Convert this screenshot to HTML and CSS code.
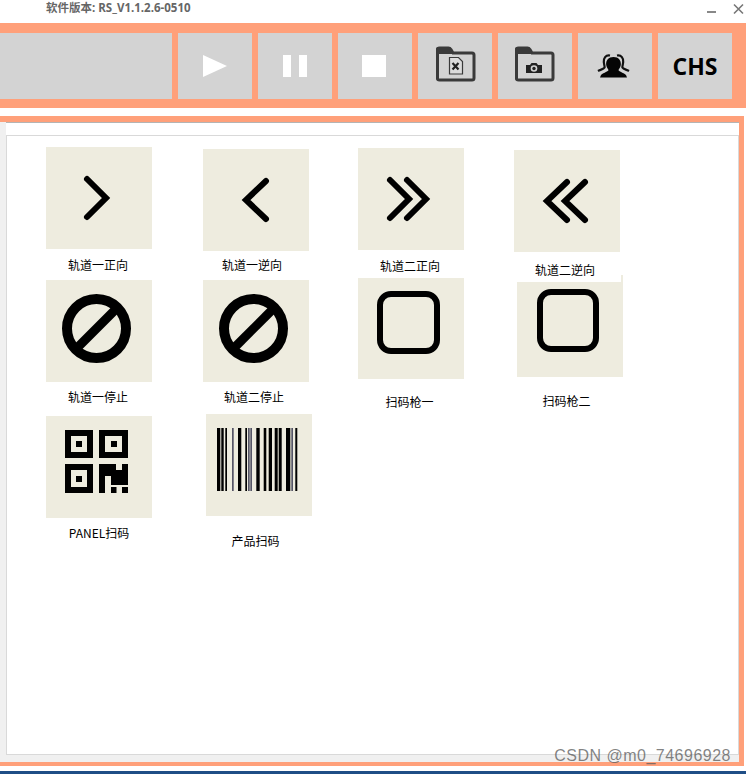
FILE: index.html
```html
<!DOCTYPE html>
<html lang="zh-CN">
  <head>
    <meta charset="UTF-8">
    <title>软件版本</title>
    <link rel="stylesheet" href="styles.css">
  </head>
  <body>
    <div class="titlebar">
      <span class="version">软件版本: RS_V1.1.2.6-0510</span>
      <svg class="winbtns" width="40" height="23" viewBox="0 0 40 23">
        <path d="M1 12h9" stroke="#888" stroke-width="2" fill="none"/>
        <path d="M28 4.5l9 9M37 4.5l-9 9" stroke="#777" stroke-width="1.6" fill="none"/>
      </svg>
    </div>

    <div class="toolbar">
      <div class="tool blank"></div>
      <div class="tool">
        <svg width="74" height="66" viewBox="0 0 74 66"><polygon points="25,22 49,33 25,44" fill="#fff"/></svg>
      </div>
      <div class="tool">
        <svg width="74" height="66" viewBox="0 0 74 66"><path d="M25 22h8v22h-8zM41 22h8v22h-8z" fill="#fff"/></svg>
      </div>
      <div class="tool">
        <svg width="74" height="66" viewBox="0 0 74 66"><rect x="24" y="22" width="24" height="22" fill="#fff"/></svg>
      </div>
      <div class="tool">
        <svg width="74" height="66" viewBox="0 0 74 66">
          <path d="M19.500 46.500V17q0-2 2-2h9q1.500 0 2.500 1.500l2 3.500h19q2 0 2 2v23q0 2-2 2H21.500q-2 0-2-1.500z" fill="none" stroke="#3a3a3a" stroke-width="3"/>
          <path d="M18 21v-5q0-2 2-2h10q2 0 3 2l3 5z" fill="#3a3a3a"/>
          <path d="M31.500 24.500h9l4 4v12.500h-13z" fill="#dcdcdc" stroke="#3a3a3a" stroke-width="1.200"/>
          <path d="M34.500 30l6 6.500M40.500 30l-6 6.500" stroke="#222" stroke-width="2.200" fill="none"/>
        </svg>
      </div>
      <div class="tool">
        <svg width="74" height="66" viewBox="0 0 74 66">
          <path d="M18.500 46.500V17q0-2 2-2h9q1.500 0 2.500 1.500l2 3.500h19q2 0 2 2v23q0 2-2 2H20.500q-2 0-2-1.500z" fill="none" stroke="#3a3a3a" stroke-width="3"/>
          <path d="M17 21v-5q0-2 2-2h10q2 0 3 2l3 5z" fill="#3a3a3a"/>
          <path d="M28 32h4l1.500-2h5l1.500 2h4v8H28z" fill="#222"/>
          <circle cx="36" cy="35.500" r="3.300" fill="#d3d3d3"/>
          <circle cx="36" cy="35.500" r="1.700" fill="#222"/>
        </svg>
      </div>
      <div class="tool">
        <svg width="74" height="66" viewBox="0 0 74 66">
          <path d="M32 22.500c-4.500-.8-6.500 3-6.200 6.500.2 2.500 1 4 .8 5.500-1 1.800-4.600 2.300-6.600 3.500M39 22.500c4.500-.8 6.500 3 6.200 6.500-.2 2.500-1 4-.8 5.500 1 1.800 4.600 2.300 6.600 3.500" fill="none" stroke="#111" stroke-width="2.200"/>
          <path d="M35.500 24c5 0 7.800 3.500 7.300 8-.3 2.300-1.800 3.800-2.300 5 0 1.500 4.500 2.300 7.500 5l1 2.500H22l1-2.500c3-2.700 7.500-3.500 7.500-5-.5-1.200-2-2.700-2.300-5-.5-4.500 2.300-8 7.300-8z" fill="#050505"/>
        </svg>
      </div>
      <div class="tool lang">CHS</div>
    </div>

    <div class="panel">
      <div class="tabstrip"></div>
      <div class="tabbody">
        <div class="buttons">

          <div class="cell r1c1">
            <div class="tile">
              <svg width="106" height="102" viewBox="0 0 106 102"><path class="line" d="M41 32L60 51L41 70"/></svg>
            </div>
            <div class="cap">轨道一正向</div>
          </div>
          <div class="cell r1c2">
            <div class="tile">
              <svg width="106" height="102" viewBox="0 0 106 102"><path class="line" d="M63 32L43 51L63 70"/></svg>
            </div>
            <div class="cap">轨道一逆向</div>
          </div>
          <div class="cell r1c3">
            <div class="tile">
              <svg width="106" height="102" viewBox="0 0 106 102"><path class="line" d="M32 32L51 51L32 70M49 32L68 51L49 70"/></svg>
            </div>
            <div class="cap">轨道二正向</div>
          </div>
          <div class="cell r1c4">
            <div class="tile">
              <svg width="106" height="102" viewBox="0 0 106 102"><path class="line" d="M53 32L33 51L53 70M71 32L51 51L71 70"/></svg>
            </div>
            <div class="cap">轨道二逆向</div>
          </div>

          <div class="cell r2c1">
            <div class="tile">
              <svg width="106" height="102" viewBox="0 0 106 102">
                <circle class="ring" cx="50.500" cy="48.500" r="29.500"/>
                <path class="slash" d="M71 28L30 69"/>
              </svg>
            </div>
            <div class="cap">轨道一停止</div>
          </div>
          <div class="cell r2c2">
            <div class="tile">
              <svg width="106" height="102" viewBox="0 0 106 102">
                <circle class="ring" cx="50.500" cy="48.500" r="29.500"/>
                <path class="slash" d="M71 28L30 69"/>
              </svg>
            </div>
            <div class="cap">轨道二停止</div>
          </div>
          <div class="cell r2c3">
            <div class="tile">
              <svg width="106" height="102" viewBox="0 0 106 102"><rect class="box" x="22" y="16" width="57" height="57" rx="11"/></svg>
            </div>
            <div class="cap">扫码枪一</div>
          </div>
          <div class="cell r2c4">
            <div class="tile">
              <svg width="106" height="102" viewBox="0 0 106 102"><rect class="box" x="23" y="17" width="56" height="57" rx="11"/></svg>
            </div>
            <div class="cap">扫码枪二</div>
          </div>

          <div class="cell r3c1">
            <div class="tile">
              <svg width="106" height="102" viewBox="0 0 106 102">
                <path class="qr" fill-rule="evenodd" d="M19 14h28v28H19zM25 20v16h16V20zM53 14h29v28H53zM59 20v16h17V20zM19 48h28v29H19zM25 54v17h16V54z"/>
                <path class="qr" d="M30 25h6v6h-6zM65 25h6v6h-6zM30 60h6v6h-6z"/>
                <path class="qr" d="M53 48h17v6h6v-6h6v21H65V60h-6v17h-6zM65 71h5.500v6H65zM76 71h6v6h-6z"/>
              </svg>
            </div>
            <div class="cap">PANEL扫码</div>
          </div>
          <div class="cell r3c2">
            <div class="tile">
              <svg width="106" height="102" viewBox="0 0 106 102">
                <path class="qr" d="M11 14h3.300v63H11zM15.300 14h2.400v63h-2.400zM19.300 14H21v63h-1.700zM32 14h3.300v63H32zM39.300 14H41v63h-1.700zM50.300 14h3.400v63h-3.400zM57.700 14h2.600v63h-2.600zM62.700 14H66v63h-3.300zM68.700 14h3v63h-3zM72.700 14h3v63h-3zM80 14h4.300v63H80zM89.300 14h2v63h-2z"/>
                <path class="qr-soft" d="M26 14h1.700v63H26zM42 14h1.700v63H42zM44.300 14H46v63h-1.700zM85.300 14H87v63h-1.700z"/>
              </svg>
            </div>
            <div class="cap">产品扫码</div>
          </div>

        </div>
      </div>
    </div>

    <div class="bottombar"></div>
    <div class="watermark">CSDN @m0_74696928</div>
  </body>
</html>
```

FILE: styles.css
```css
html, body {
  margin: 0;
  padding: 0;
}
body {
  position: relative;
  width: 746px;
  height: 774px;
  overflow: hidden;
  background-color: #fff;
  font-family: "Noto Sans CJK SC", "Open Sans", sans-serif;
}

.titlebar {
  display: flex;
  height: 23px;
}
.version {
  margin-left: 46px;
  font-family: "Open Sans", "Noto Sans CJK SC", sans-serif;
  font-size: 11.500px;
  font-weight: 700;
  line-height: 16px;
  color: #666;
}
.winbtns {
  margin-left: auto;
}

.toolbar {
  display: flex;
  gap: 6px;
  height: 66px;
  padding: 10px 14px 9px 0;
  background-color: #ffa07a;
}
.tool {
  width: 74px;
  height: 66px;
  background-color: #d3d3d3;
}
.tool svg {
  display: block;
}
.blank {
  flex: 1;
}
.lang {
  font-family: "Open Sans", sans-serif;
  font-size: 23px;
  font-weight: 700;
  line-height: 66px;
  text-align: center;
  color: #000;
}

.panel {
  width: 739px;
  height: 640px;
  margin-top: 8px;
  border-top: 6px solid #ffa07a;
  border-right: 5px solid #ffa07a;
  border-bottom: 4px solid #ffa07a;
  background-color: #f0f0f0;
}
.tabstrip {
  height: 12px;
  margin-left: 6px;
  border-top: 1px solid #b4b4b4;
  background-color: #fff;
}
.tabbody {
  height: 618px;
  margin-left: 6px;
  border: 1px solid #d9d9d9;
  background-color: #fff;
}

.buttons {
  display: grid;
  grid-template-columns: 157px 155px 156px 107px;
  grid-template-rows: 131px 136px auto;
  padding: 11px 0 0 39px;
}
.cell {
  width: 106px;
}
.tile {
  width: 106px;
  height: 102px;
  background-color: #eeecdf;
}
.tile svg {
  display: block;
}
.cap {
  box-sizing: border-box;
  width: 106px;
  font-size: 12px;
  line-height: 16px;
  text-align: center;
  color: #000;
}

.line {
  fill: none;
  stroke: #000;
  stroke-width: 6;
  stroke-linecap: round;
}
.ring {
  fill: none;
  stroke: #000;
  stroke-width: 10;
}
.slash {
  fill: none;
  stroke: #000;
  stroke-width: 9;
}
.box {
  fill: none;
  stroke: #000;
  stroke-width: 6;
}
.qr {
  fill: #000;
}
.qr-soft {
  fill: #556;
}

/* the buttons were never lined up, each one sits a little off */
.r1c1 .cap { margin-top: 8px; padding-right: 2px; }
.r1c2 { margin-top: 2px; }
.r1c2 .cap { margin-top: 6px; padding-right: 8px; }
.r1c3 { margin-top: 1px; }
.r1c3 .cap { margin-top: 8px; padding-right: 2px; }
.r1c4 { margin-top: 3px; }
.r1c4 .cap {
  position: relative;
  z-index: 1;
  width: 107px;
  height: 30px;
  padding: 10px 5px 0 0;
  background-color: #fff;
}
.r2c1 { margin-top: 2px; }
.r2c1 .cap { margin-top: 7px; padding-right: 2px; }
.r2c2 { margin-top: 2px; }
.r2c2 .cap { margin-top: 7px; padding-right: 4px; }
.r2c3 .tile { height: 101px; }
.r2c3 .cap { margin-top: 15px; padding-right: 3px; }
.r2c4 { margin: -3px 0 0 3px; }
.r2c4 .cap { margin-top: 16px; padding-right: 7px; }
.r3c1 { margin-top: 2px; }
.r3c1 .cap { margin-top: 7px; }
.r3c2 { margin-left: 3px; }
.r3c2 .cap { margin-top: 17px; padding-right: 7px; }

.bottombar {
  height: 3px;
  margin-top: 5px;
  background-color: #1f4e86;
}
.watermark {
  position: absolute;
  right: 15px;
  bottom: 9px;
  font-family: "Liberation Sans", sans-serif;
  font-size: 16px;
  letter-spacing: 0.5px;
  color: rgba(90, 90, 90, 0.75);
}
```
